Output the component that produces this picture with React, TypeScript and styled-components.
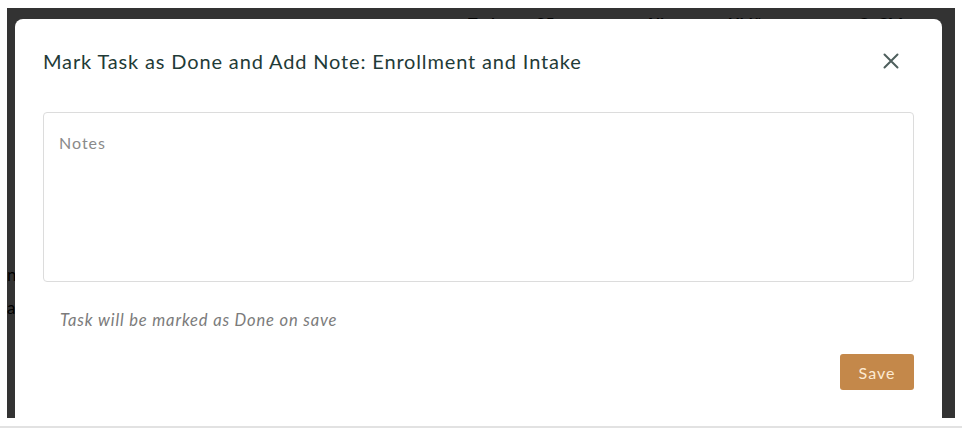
import styled, { createGlobalStyle } from "styled-components";

const GlobalStyle = createGlobalStyle`
    html, body {
        margin: 0;
        padding: 0;
        background: #ffffff;
        font-family: Lato, "Open Sans", sans-serif;
    }
`;

const Viewport = styled.div`
    height: 428px;
    box-sizing: border-box;
    padding: 8px 7px 0;
    border-bottom: 2px solid #e2e2e2;
    overflow: hidden;
`;

const Frame = styled.div`
    position: relative;
    height: 410px;
    background: #ffffff;
`;

const BehindPage = styled.div`
    display: flex;
    flex-direction: column;
    height: 100%;
    color: #000;
    font-size: 16px;
`;

const TopNav = styled.div`
    display: flex;
    align-items: center;
    padding: 5px 0 0 461px;
    font-weight: 700;
`;

const NavItem = styled.span<{ width: number }>`
    width: ${(p) => p.width}px;
    white-space: nowrap;
`;

const SideLines = styled.div`
    display: flex;
    flex-direction: column;
    gap: 12px;
    margin-top: 232px;
    font-size: 17px;
`;

const Backdrop = styled.div`
    position: absolute;
    inset: 0;
    background: rgba(0, 0, 0, 0.8);
`;

const Modal = styled.div`
    position: absolute;
    left: 8px;
    top: 11px;
    width: 927px;
    height: 420px;
    background: #ffffff;
    border-radius: 8px;
    display: flex;
    flex-direction: column;
    letter-spacing: 0.85px;
`;

const Header = styled.div`
    height: 84px;
    display: flex;
    align-items: center;
    justify-content: space-between;
    padding: 0 43px 0 28px;
`;

const Title = styled.h2`
    margin: 0;
    font-size: 20px;
    font-weight: 400;
    color: #1f3b37;
`;

const CloseButton = styled.button`
    border: none;
    background: none;
    padding: 0;
    width: 16px;
    height: 16px;
    display: flex;
    cursor: pointer;
    color: #4e5f5d;
`;

const Body = styled.div`
    padding: 9px 28px 0;
    display: flex;
    flex-direction: column;
`;

const NotesField = styled.textarea`
    box-sizing: border-box;
    height: 170px;
    width: 100%;
    resize: none;
    border: 1px solid #dcdcdc;
    border-radius: 4px;
    padding: 20px 15px;
    font-family: Lato, "Open Sans", sans-serif;
    font-size: 16px;
    letter-spacing: 1px;
    color: #333;
    outline: none;

    &::placeholder {
        color: #8a8a8a;
    }
`;

const Hint = styled.p`
    margin: 28px 0 0 17px;
    font-size: 16.5px;
    line-height: 20px;
    font-style: italic;
    color: #7b7b7b;
`;

const Footer = styled.div`
    display: flex;
    justify-content: flex-end;
    padding: 24px 28px 0;
`;

const SaveButton = styled.button`
    width: 74px;
    height: 36px;
    border: none;
    border-radius: 3px;
    background: #c4884a;
    color: #fdebd3;
    font-family: Lato, "Open Sans", sans-serif;
    font-size: 16px;
    letter-spacing: 1px;
    cursor: pointer;
`;

const App = () => {
    return (
        <>
            <GlobalStyle />
            <Viewport>
                <Frame>
                    <BehindPage>
                        <TopNav>
                            <NavItem width={68}>Tasks</NavItem>
                            <NavItem width={40}>25</NavItem>
                            <NavItem width={69}>●</NavItem>
                            <NavItem width={83}>Alissa</NavItem>
                            <NavItem width={130}>Ubiñas</NavItem>
                            <NavItem width={60}>CoCM</NavItem>
                        </TopNav>
                        <SideLines>
                            <span>n</span>
                            <span>a</span>
                        </SideLines>
                    </BehindPage>
                    <Backdrop />
                    <Modal>
                        <Header>
                            <Title>
                                Mark Task as Done and Add Note: Enrollment and
                                Intake
                            </Title>
                            <CloseButton aria-label="Close">
                                <svg
                                    width="16"
                                    height="16"
                                    viewBox="0 0 16 16"
                                    fill="none"
                                    stroke="currentColor"
                                    strokeWidth="2"
                                    strokeLinecap="round"
                                >
                                    <path d="M1.5 1.5 L14.5 14.5 M14.5 1.5 L1.5 14.5" />
                                </svg>
                            </CloseButton>
                        </Header>
                        <Body>
                            <NotesField placeholder="Notes" />
                            <Hint>Task will be marked as Done on save</Hint>
                        </Body>
                        <Footer>
                            <SaveButton>Save</SaveButton>
                        </Footer>
                    </Modal>
                </Frame>
            </Viewport>
        </>
    );
};

export default App;
